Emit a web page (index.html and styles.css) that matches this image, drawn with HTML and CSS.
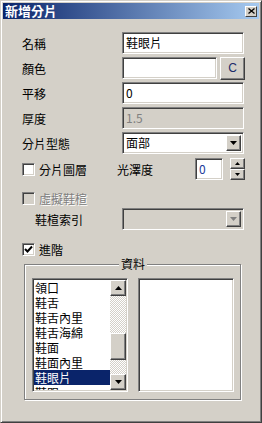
FILE: index.html
```html
<!DOCTYPE html>
<html lang="zh-Hant">
<head>
    <meta charset="UTF-8">
    <title>新增分片</title>
<link rel="stylesheet" href="styles.css">
</head>
<body>
    <div class="window">
        <div class="titlebar">
            <span class="title">新增分片</span>
            <span class="close_btn">
                <svg width="7" height="6" viewBox="0 0 7 6"><path d="M0.5 0.5 L6.5 5.5 M6.5 0.5 L0.5 5.5" stroke="#000" stroke-width="1.3"/></svg>
            </span>
        </div>
        <div class="content">
            <div class="row">
                <span class="lbl">名稱</span>
                <div class="field">鞋眼片</div>
            </div>
            <div class="row">
                <span class="lbl">顏色</span>
                <div class="field field_short"></div>
                <div class="btn color_btn">C</div>
            </div>
            <div class="row">
                <span class="lbl">平移</span>
                <div class="field">0</div>
            </div>
            <div class="row">
                <span class="lbl">厚度</span>
                <div class="field disabled">1.5</div>
            </div>
            <div class="row">
                <span class="lbl">分片型態</span>
                <div class="field select">
                    <span>面部</span>
                    <span class="btn drop_btn"><svg width="7" height="4" viewBox="0 0 7 4"><path d="M0 0 H7 L3.5 4 Z" fill="#000"/></svg></span>
                </div>
            </div>
            <div class="row row_layer">
                <label class="chk chk_layer"><span class="box"></span>分片圖層</label>
                <span class="lbl_gloss">光澤度</span>
                <div class="field spin_field">0</div>
                <div class="spin">
                    <span class="btn spin_btn"><svg width="5" height="3" viewBox="0 0 5 3"><path d="M2.5 0 L5 3 H0 Z" fill="#000"/></svg></span>
                    <span class="btn spin_btn"><svg width="5" height="3" viewBox="0 0 5 3"><path d="M0 0 H5 L2.5 3 Z" fill="#000"/></svg></span>
                </div>
            </div>
            <div class="row row_small row_virtual">
                <label class="chk chk_disabled"><span class="box"></span>虛擬鞋楦</label>
            </div>
            <div class="row row_index">
                <span class="lbl lbl_indent">鞋楦索引</span>
                <div class="field select disabled">
                    <span></span>
                    <span class="btn drop_btn"><svg width="7" height="4" viewBox="0 0 7 4"><path d="M0 0 H7 L3.5 4 Z" fill="#808080"/></svg></span>
                </div>
            </div>
            <div class="row row_small row_adv">
                <label class="chk"><span class="box"><svg width="9" height="9" viewBox="0 0 9 9"><path d="M1 4 L3.5 6.5 L8 1.5" stroke="#000" stroke-width="2" fill="none"/></svg></span>進階</label>
            </div>
            <fieldset class="group">
                <legend>資料</legend>
                <div class="lists">
                    <div class="listbox">
                        <ul class="items">
                            <li>領口</li>
                            <li>鞋舌</li>
                            <li>鞋舌內里</li>
                            <li>鞋舌海綿</li>
                            <li>鞋面</li>
                            <li>鞋面內里</li>
                            <li class="selected">鞋眼片</li>
                            <li>鞋跟</li>
                        </ul>
                        <div class="scrollbar">
                            <span class="btn scroll_btn"><svg width="7" height="4" viewBox="0 0 7 4"><path d="M3.5 0 L7 4 H0 Z" fill="#000"/></svg></span>
                            <div class="track"><span class="btn thumb"></span></div>
                            <span class="btn scroll_btn"><svg width="7" height="4" viewBox="0 0 7 4"><path d="M0 0 H7 L3.5 4 Z" fill="#000"/></svg></span>
                        </div>
                    </div>
                    <div class="listbox"></div>
                </div>
            </fieldset>
        </div>
    </div>
</body>
</html>
```

FILE: styles.css
```css
*{
    margin:0;
    padding:0;
    box-sizing:border-box;
}
body{
    background-color:#D4D0C8;
    font-family:"Noto Sans CJK TC","Liberation Sans",sans-serif;
    font-size:12px;
    color:#000;
}
.window{
    width:262px;
    height:423px;
    border:1px solid;
    border-color:#D4D0C8 #404040 #404040 #D4D0C8;
    box-shadow:inset 1px 1px #fff, inset -1px -1px #808080;
    padding:2px;
    background-color:#D4D0C8;
}
.titlebar{
    height:16px;
    display:flex;
    align-items:center;
    justify-content:space-between;
    padding:0 2px;
    background:linear-gradient(to right,#0A246A,#A6CAF0);
    color:#fff;
    font-weight:bold;
    font-size:13px;
    line-height:16px;
}
.btn{
    display:flex;
    align-items:center;
    justify-content:center;
    background-color:#D4D0C8;
    border:1px solid;
    border-color:#fff #404040 #404040 #fff;
    box-shadow:inset -1px -1px #808080, inset 1px 1px #D4D0C8;
}
.close_btn{
    display:flex;
    align-items:center;
    justify-content:center;
    width:12px;
    height:11px;
    background-color:#D4D0C8;
    border:1px solid;
    border-color:#fff #404040 #404040 #fff;
}
.content{
    padding:13px 0 0 19px;
}
.row{
    display:flex;
    align-items:center;
    height:22px;
    margin-top:3px;
}
.row:first-child{
    margin-top:0;
}
.lbl{
    width:100px;
}
.lbl_indent{
    padding-left:13px;
}
.field{
    width:122px;
    height:22px;
    background-color:#fff;
    border:1px solid;
    border-color:#808080 #fff #fff #808080;
    box-shadow:inset 1px 1px #404040, inset -1px -1px #D4D0C8;
    padding:0 3px;
    line-height:20px;
}
.field.disabled{
    background-color:#D4D0C8;
    color:#808080;
}
.field_short{
    width:95px;
}
.color_btn{
    width:25px;
    height:23px;
    margin-left:3px;
    font-family:"Liberation Sans",sans-serif;
    font-size:12px;
    color:#1a2a6a;
}
.select{
    display:flex;
    align-items:center;
    justify-content:space-between;
    padding:2px 2px 2px 3px;
}
.drop_btn{
    width:15px;
    height:16px;
}
.row_layer{
    margin-top:4px;
}
.chk{
    display:flex;
    align-items:center;
    gap:4px;
}
.box{
    display:flex;
    align-items:center;
    justify-content:center;
    width:13px;
    height:13px;
    background-color:#fff;
    border:1px solid;
    border-color:#808080 #fff #fff #808080;
    box-shadow:inset 1px 1px #404040, inset -1px -1px #D4D0C8;
}
.chk_layer{
    width:95px;
}
.chk_disabled{
    color:#808080;
    text-shadow:1px 1px #fff;
}
.chk_disabled .box{
    background-color:#D4D0C8;
}
.lbl_gloss{
    width:78px;
}
.spin_field{
    width:28px;
    color:#1a3a9a;
}
.spin{
    display:flex;
    flex-direction:column;
    margin-left:7px;
}
.spin_btn{
    width:15px;
    height:11px;
}
.row_small{
    height:15px;
}
.row_virtual{
    margin-top:11px;
}
.row_index{
    margin-top:2px;
}
.row_adv{
    margin-top:12px;
}
.group{
    width:217px;
    height:143px;
    margin:0 0 0 2px;
    border:1px solid #808080;
    box-shadow:inset 1px 1px #fff, 1px 1px #fff;
    padding:7px 6px 6px 7px;
    min-width:0;
}
.group legend{
    margin:0 auto;
    padding:0 2px;
    line-height:14px;
    background-color:#D4D0C8;
}
.lists{
    display:flex;
    gap:10px;
}
.listbox{
    display:flex;
    width:96px;
    height:114px;
    background-color:#fff;
    border:1px solid;
    border-color:#808080 #fff #fff #808080;
    box-shadow:inset 1px 1px #404040, inset -1px -1px #D4D0C8;
    padding:1px;
}
.items{
    flex:1;
    list-style:none;
    overflow:hidden;
}
.items li{
    height:15px;
    line-height:15px;
    padding-left:1px;
    white-space:nowrap;
}
.items li.selected{
    background-color:#0A246A;
    color:#fff;
}
.scrollbar{
    display:flex;
    flex-direction:column;
    width:16px;
}
.scroll_btn{
    width:16px;
    height:16px;
}
.track{
    flex:1;
    background:repeating-conic-gradient(#D4D0C8 0 25%,#fff 0 50%) 0 0/2px 2px;
}
.thumb{
    width:16px;
    height:27px;
    margin-top:37px;
}
```
